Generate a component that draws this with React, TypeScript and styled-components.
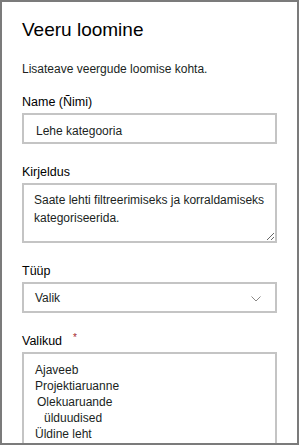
import styled, { createGlobalStyle } from 'styled-components';

const GlobalStyle = createGlobalStyle`
  html, body {
    margin: 0;
    padding: 0;
    background: #ffffff;
  }
  body {
    font-family: "Liberation Sans", Arial, sans-serif;
  }
`;

const Panel = styled.div`
  box-sizing: border-box;
  width: 299px;
  height: 445px;
  border: 2px solid #7b7b7b;
  padding: 16px 20px 0;
  overflow: hidden;
  background: #ffffff;
  color: #000000;
`;

const Title = styled.h1`
  margin: 0 0 19px;
  font-size: 19px;
  line-height: 24px;
  font-weight: 400;
  color: #000000;
`;

const Intro = styled.p`
  margin: 0 0 17px;
  font-size: 12px;
  line-height: 16px;
  color: #201f1e;
`;

const Form = styled.div`
  display: flex;
  flex-direction: column;
  gap: 20px;
`;

const Field = styled.div`
  display: flex;
  flex-direction: column;
  gap: 3px;
`;

const Label = styled.label`
  position: relative;
  display: block;
  font-size: 12.5px;
  line-height: 16px;
  color: #000000;
`;

const Required = styled.span`
  display: inline-block;
  margin-left: 11px;
  font-size: 10px;
  line-height: 10px;
  color: #a4262c;
  vertical-align: 4px;
`;

const boxBorder = `
  box-sizing: border-box;
  width: 100%;
  border: 2px solid #c4c4c4;
  background: #ffffff;
  font-family: "Liberation Sans", Arial, sans-serif;
  font-size: 12px;
  color: #201f1e;
`;

const TextInput = styled.input`
  ${boxBorder}
  display: block;
  height: 31px;
  padding: 8px 12px 3px;
  line-height: 16px;
  outline: none;
`;

const TextArea = styled.textarea`
  ${boxBorder}
  display: block;
  height: 60px;
  padding: 6px 10px 4px;
  line-height: 18px;
  resize: vertical;
  outline: none;
`;

const Select = styled.div`
  ${boxBorder}
  display: flex;
  align-items: flex-start;
  justify-content: space-between;
  height: 31px;
  padding: 6px 14px 0 11px;
  line-height: 16px;
`;

const Chevron = styled.svg`
  width: 10px;
  height: 6px;
  margin-top: 6px;
  flex-shrink: 0;
`;

const ListBox = styled.div`
  ${boxBorder}
  display: flex;
  flex-direction: column;
  height: 120px;
  padding: 8px 11px;
  line-height: 16px;
`;

const Option = styled.div<{ $indent: number }>`
  padding-left: ${(p) => p.$indent}px;
  white-space: nowrap;
`;

const options = [
  { text: 'Ajaveeb', indent: 0 },
  { text: 'Projektiaruanne', indent: 0 },
  { text: 'Olekuaruande', indent: 2 },
  { text: 'ülduudised', indent: 9 },
  { text: 'Üldine leht', indent: 0 },
];

export default function App() {
  return (
    <>
      <GlobalStyle />
      <Panel>
        <Title>Veeru loomine</Title>
        <Intro>Lisateave veergude loomise kohta.</Intro>
        <Form>
          <Field>
            <Label>Name (Ñimi)</Label>
            <TextInput defaultValue="Lehe kategooria" readOnly />
          </Field>
          <Field>
            <Label>Kirjeldus</Label>
            <TextArea
              defaultValue="Saate lehti filtreerimiseks ja korraldamiseks kategoriseerida."
              readOnly
            />
          </Field>
          <Field>
            <Label>Tüüp</Label>
            <Select>
              <span>Valik</span>
              <Chevron viewBox="0 0 10 6">
                <path d="M0.5 0.5 L5 5 L9.5 0.5" fill="none" stroke="#8a8886" strokeWidth="1" />
              </Chevron>
            </Select>
          </Field>
          <Field>
            <Label>
              Valikud<Required>*</Required>
            </Label>
            <ListBox>
              {options.map((o) => (
                <Option key={o.text} $indent={o.indent}>
                  {o.text}
                </Option>
              ))}
            </ListBox>
          </Field>
        </Form>
      </Panel>
    </>
  );
}
